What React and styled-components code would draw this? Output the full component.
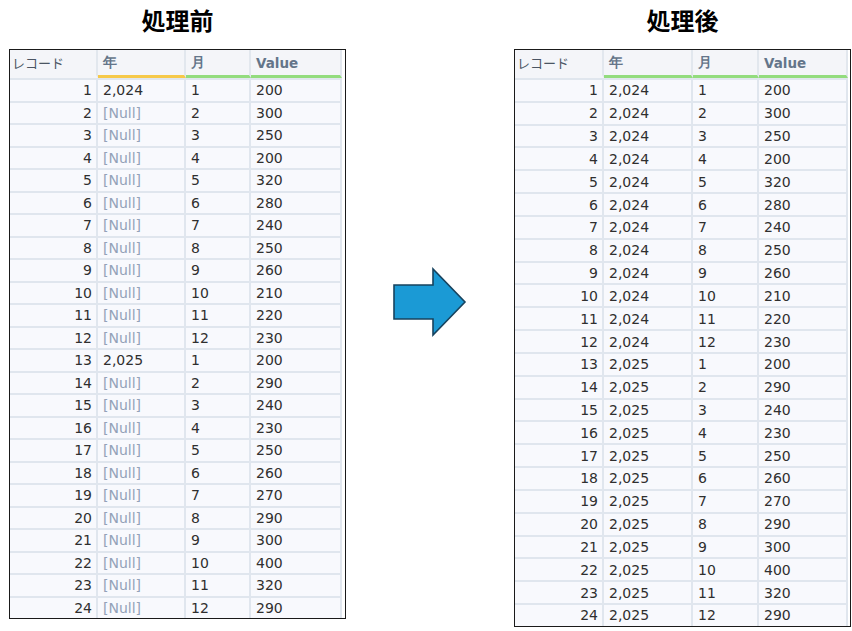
import React from 'react';
import styled, { createGlobalStyle } from 'styled-components';

const GlobalStyle = createGlobalStyle`
  body {
    margin: 0;
    background: #fff;
    font-family: "DejaVu Sans", Verdana, sans-serif;
  }
`

const Page = styled.div`
  display: flex;
  align-items: flex-start;
  width: 852px;
  height: 631px;
  padding-left: 9px;
  box-sizing: border-box;
`

const Panel = styled.div`
  display: flex;
  flex-direction: column;
  width: 337px;
`

const Title = styled.h2`
  margin: 0;
  height: 49px;
  line-height: 40px;
  text-align: center;
  font-family: "Noto Sans CJK JP", sans-serif;
  font-weight: 700;
  font-size: 24px;
  color: #000;
`

const Table = styled.div`
  border: 1px solid #1a1a1a;
  background: #fff;
  padding-right: ${props => props.gap}px;
`

const Row = styled.div`
  display: grid;
  grid-template-columns: ${props => props.cols};
  height: ${props => props.h}px;
`

const HeadCell = styled.div`
  display: flex;
  align-items: center;
  padding-left: ${props => props.first ? 2 : 5}px;
  background: #f4f5f9;
  border-right: 2px solid #e2e7ee;
  border-bottom: 3px solid ${props => props.line || '#f4f5f9'};
  box-shadow: 0 2px 0 #e2e7ee;
  font-size: ${props => props.first ? 13 : 13.5}px;
  font-weight: ${props => props.first ? 400 : 700};
  color: ${props => props.first ? '#4b5563' : '#64758a'};
  font-family: ${props => props.first ? '"Noto Sans CJK JP", sans-serif' : '"DejaVu Sans", sans-serif'};
`

const Cell = styled.div`
  display: flex;
  align-items: center;
  justify-content: ${props => props.right ? 'flex-end' : 'flex-start'};
  padding: 0 4px 0 5px;
  background: #f8f9fd;
  border-right: 2px solid #e0e6ee;
  border-top: 2px solid #e0e6ee;
  font-size: 14px;
  color: ${props => props.muted ? '#93a2b8' : '#2f2f2f'};
  white-space: nowrap;
`

const ArrowArea = styled.div`
  display: flex;
  align-items: center;
  justify-content: center;
  width: 168px;
  height: 606px;
`

const values = [200, 300, 250, 200, 320, 280, 240, 250, 260, 210, 220, 230, 200, 290, 240, 230, 250, 260, 270, 290, 300, 400, 320, 290];

const rows = values.map((v, i) => ({
  id: i + 1,
  year: i < 12 ? '2,024' : '2,025',
  month: (i % 12) + 1,
  value: v,
}));

function DataTable({ filled, rowH, gap, yearLine, cols }) {
  return (
    <Table gap={gap}>
      <Row h={28} cols={cols}>
        <HeadCell first>レコード</HeadCell>
        <HeadCell line={yearLine}>年</HeadCell>
        <HeadCell line="#93dc7e">月</HeadCell>
        <HeadCell line="#93dc7e">Value</HeadCell>
      </Row>
      {rows.map(r => {
        const showYear = filled || r.id === 1 || r.id === 13;
        return (
          <Row h={rowH} cols={cols} key={r.id}>
            <Cell right>{r.id}</Cell>
            <Cell muted={!showYear}>{showYear ? r.year : '[Null]'}</Cell>
            <Cell>{r.month}</Cell>
            <Cell>{r.value}</Cell>
          </Row>
        );
      })}
    </Table>
  );
}

function Arrow() {
  return (
    <svg width="76" height="72" viewBox="0 0 76 72">
      <path d="M2 18 H41 V2 L73 35 L41 68 V52 H2 Z" fill="#1b9ad5" stroke="#17435e" strokeWidth="1.6" strokeLinejoin="miter" />
    </svg>
  );
}

export default function App() {
  return (
    <>
      <GlobalStyle />
      <Page>
        <Panel>
          <Title>処理前</Title>
          <DataTable filled={false} rowH={22.5} gap={3} yearLine="#f6c94a" cols="88px 88px 65px 1fr" />
        </Panel>
        <ArrowArea>
          <Arrow />
        </ArrowArea>
        <Panel>
          <Title>処理後</Title>
          <DataTable filled rowH={22.83} gap={2} yearLine="#93dc7e" cols="89px 89px 66px 1fr" />
        </Panel>
      </Page>
    </>
  );
}
